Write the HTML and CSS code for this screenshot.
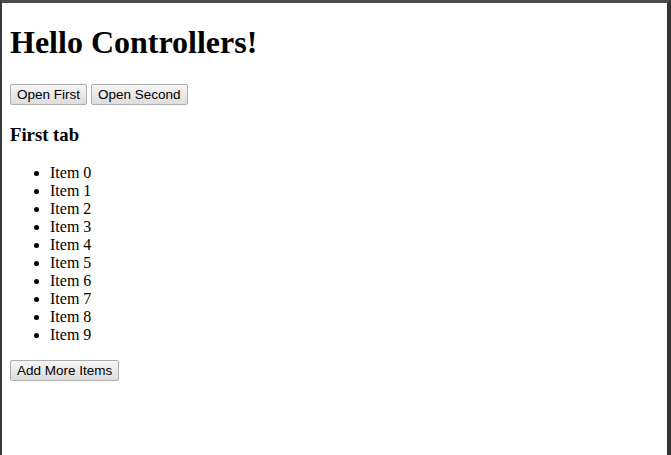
FILE: index.html
```html
<!DOCTYPE html>
<html>
<head>
<meta charset="utf-8">
<link rel="stylesheet" href="styles.css">
</head>
<body>
<div class="frame">
  <div class="page">
    <h1 class="title">Hello Controllers!</h1>
    <div class="tabs">
      <button class="btn">Open First</button>
      <button class="btn">Open Second</button>
    </div>
    <h3 class="tab-title">First tab</h3>
    <ul class="items">
      <li>Item 0</li>
      <li>Item 1</li>
      <li>Item 2</li>
      <li>Item 3</li>
      <li>Item 4</li>
      <li>Item 5</li>
      <li>Item 6</li>
      <li>Item 7</li>
      <li>Item 8</li>
      <li>Item 9</li>
    </ul>
    <button class="btn">Add More Items</button>
  </div>
</div>
</body>
</html>
```

FILE: styles.css
```css
html, body {
  margin: 0;
  padding: 0;
  height: 100%;
  background: #ffffff;
}
.frame {
  box-sizing: border-box;
  height: 455px;
  border-top: 3px solid #4b4b4b;
  border-left: 2px solid #3a3a3a;
  border-right: 4px solid #333333;
  background: #ffffff;
  font-family: "Liberation Serif", "Times New Roman", serif;
  font-size: 16px;
  color: #000000;
  overflow: hidden;
}
.page {
  margin: 8px;
}
.title {
  font-size: 32px;
  font-weight: bold;
  margin: 21.44px 0;
  line-height: 37px;
}
.tabs {
  display: flex;
  gap: 4px;
  padding-top: 1px;
}
.tab-title {
  font-size: 18.72px;
  font-weight: bold;
  margin: 18.72px 0;
  line-height: 22px;
}
.items {
  margin: 16px 0;
  padding-left: 40px;
  line-height: 18px;
}
.btn {
  font-family: "Liberation Sans", Arial, sans-serif;
  font-size: 13.5px;
  line-height: 17px;
  color: #000000;
  padding: 1px 6px;
  border: 1px solid #adadad;
  border-radius: 2px;
  background: linear-gradient(#f6f6f6, #dddddd);
  margin: 0;
}
```
